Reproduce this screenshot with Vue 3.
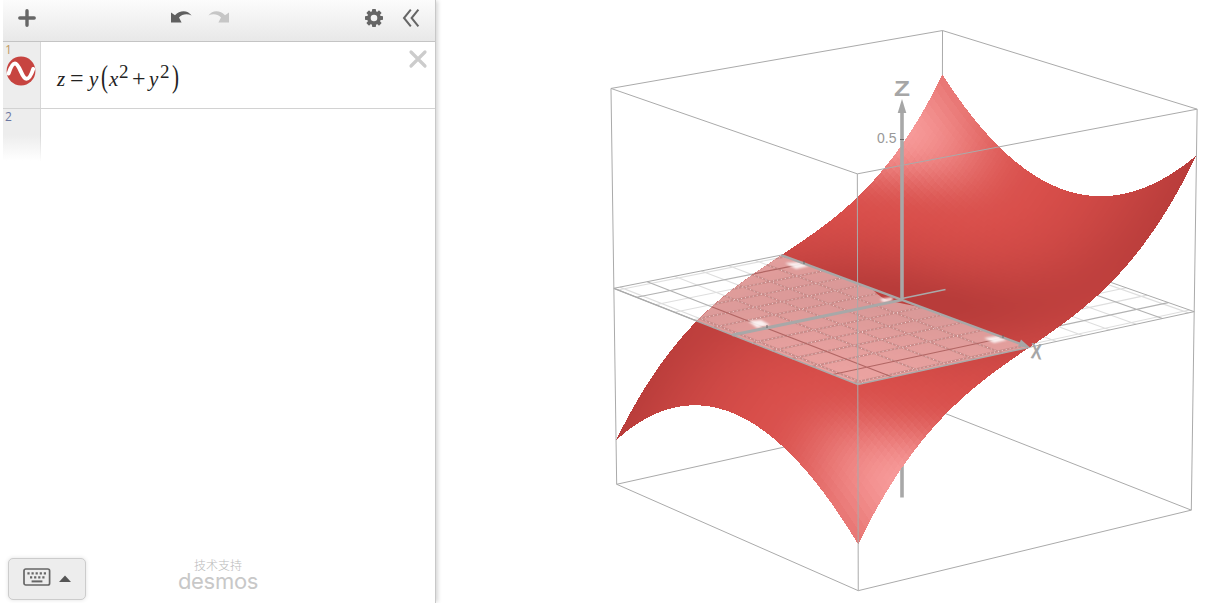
<template>
  <div class="calc">
    <aside class="panel">
      <header class="bar">
        <button class="bar__btn bar__btn--add">
          <svg width="18" height="18" viewBox="0 0 18 18"><path d="M9 1.8V16.2M1.8 9H16.2" stroke="#666" stroke-width="3.4" stroke-linecap="round" /></svg>
        </button>
        <button class="bar__btn bar__btn--undo">
          <svg width="22" height="14" viewBox="0 0 22 14"><path :d="undoPath" fill="#606060" /></svg>
        </button>
        <button class="bar__btn bar__btn--redo">
          <svg width="22" height="14" viewBox="0 0 22 14"><path :d="undoPath" fill="#c6c6c6" transform="translate(22 0) scale(-1 1)" /></svg>
        </button>
        <button class="bar__btn bar__btn--gear">
          <svg width="20" height="20" viewBox="-10 -10 20 20">
            <rect v-for="a in 8" :key="a" x="-2" y="-9" width="4" height="5" rx="0.8" fill="#666" :transform="`rotate(${a * 45})`" />
            <circle r="5.1" fill="none" stroke="#666" stroke-width="3.6" />
          </svg>
        </button>
        <button class="bar__btn bar__btn--fold">
          <svg width="18" height="20" viewBox="0 0 18 20"><path d="M8.8 1.6L2 10L8.8 18.4M16.4 1.6L9.6 10L16.4 18.4" fill="none" stroke="#666" stroke-width="2" /></svg>
        </button>
      </header>

      <div class="row">
        <div class="row__tab">
          <span class="row__num row__num--active">1</span>
          <svg class="row__icon" width="30" height="30" viewBox="0 0 30 30">
            <circle cx="15" cy="15" r="14.4" fill="#c74440" />
            <path d="M2.600 17.500C4.600 11 6.600 7.400 9 7.400C13.600 7.400 15.800 22.800 20.400 22.800C23.400 22.800 25.600 18 27.200 13" fill="none" stroke="#fff" stroke-width="4" stroke-linecap="round" />
          </svg>
        </div>
        <div class="row__math">
          <i class="z">z</i><span class="eq">=</span><i class="y1">y</i><span class="paren">(</span><i class="x">x</i><span class="pow">2</span><span class="plus">+</span><i class="y2">y</i><span class="pow">2</span><span class="paren paren--r">)</span>
        </div>
        <svg class="row__close" width="20" height="20" viewBox="0 0 20 20"><path d="M3 3L17 17M17 3L3 17" stroke="#ccc" stroke-width="3.2" stroke-linecap="round" /></svg>
      </div>
      <div class="row row--next">
        <div class="row__tab row__tab--fade"><span class="row__num">2</span></div>
      </div>

      <footer class="foot">
        <button class="keypad">
          <svg width="28" height="18" viewBox="0 0 28 18">
            <rect x="1" y="1" width="25.6" height="16" rx="1.8" fill="none" stroke="#666" stroke-width="1.7" />
            <path d="M4.4 5.4H24M7 9.4H21.6" stroke="#666" stroke-width="2.2" stroke-dasharray="2.2 1.9" />
            <path d="M8.6 13.4H19.4" stroke="#666" stroke-width="2" />
          </svg>
          <svg width="14" height="8" viewBox="0 0 14 8"><path d="M7 0.6L13 7H1Z" fill="#555" /></svg>
        </button>
        <div class="brand">
          <span class="brand__by">技术支持</span>
          <span class="brand__name">desmos</span>
        </div>
      </footer>
    </aside>

    <svg class="graph" width="786" height="603" viewBox="436 0 786 603">
      <defs>
        <filter id="soft" x="-30%" y="-50%" width="160%" height="200%"><feGaussianBlur stdDeviation="0.9" /></filter>
        <clipPath id="redArea"><path :d="lowerOutline" /></clipPath>
      </defs>

      <!-- parts hidden behind the surface -->
      <path :d="backEdges" class="edge" />
      <path d="M902 299V497.500" class="axis axis--z" />
      <path :d="minorLines" class="minor" />
      <path :d="majorLines" class="major" />
      <path :d="planeBorder" class="edge" />

      <g shape-rendering="crispEdges">
        <path v-for="(c, i) in lowerCells" :key="i" :d="c.d" :fill="c.fill" />
      </g>

      <!-- translucent xy plane over the lower half -->
      <g clip-path="url(#redArea)">
        <path :d="frontPlane" fill="#fff" fill-opacity="0.48" />
        <path :d="frontMinor" class="veil" />
        <path :d="frontMinor" class="dots" />
        <path :d="frontMajor" class="veil veil--major" />
      </g>
      <path :d="frontBorder" class="edge edge--plane" />

      <g shape-rendering="crispEdges">
        <path v-for="(c, i) in upperCells" :key="i" :d="c.d" :fill="c.fill" />
      </g>
      <path d="M873 290Q882 299 890 301Q905 304 924 308L902 298.500Z" fill="#bd403d" />

      <g fill="#fff" filter="url(#soft)" opacity="0.85">
        <path d="M785 263L800 262L809 266L796 269Z" />
        <path d="M748 321L761 320L770 325L757 328Z" />
        <path d="M984 338L998 336L1007 340L994 343Z" />
        <path d="M880 299L893 297L892 301L883 302Z" />
      </g>

      <path :d="xAxis" class="axis" />
      <path :d="yAxis" class="axis axis--y" />
      <path d="M902 298.500L945.500 289.500" stroke="#aaa" stroke-width="1.500" />
      <path d="M902 299V108" class="axis axis--z" />
      <path d="M902 99L906.300 113H897.700Z" fill="#a6a6a6" />
      <path d="M1030 347.500L1018 346.500L1021 339.500Z" fill="#a6a6a6" />
      <path d="M900 139.500H904M767 325V328M804 261V264M1003 335V338" stroke="#666" stroke-width="1" />
      <path :d="frontEdges" class="edge" />

      <text x="894" y="96" class="name" textLength="16" lengthAdjust="spacingAndGlyphs">Z</text>
      <text x="877" y="143" class="tick">0.5</text>
      <text class="name name--x" transform="translate(1030.500 358) rotate(9) skewX(6)" textLength="11" lengthAdjust="spacingAndGlyphs">X</text>
    </svg>
  </div>
</template>

<script setup>
const undoPath = 'M1 2.6L5 5.2C9.500 0.200 17.500 -0.600 21.600 5.600C17.400 3.200 12.400 3.800 9 7.400L11.600 12.600H1Z'

// camera
const YAW = 53.25 * Math.PI / 180
const PITCH = 16.1 * Math.PI / 180
const DIST = 27.9
const FOCAL = 5784
const S = Math.sin(YAW)
const C = Math.cos(YAW)
const CX = 902
const CY = 299.9

// half size of the visible box, in graph units
const HALF = 0.622

function project(x, y, z) {
  const side = x * C + y * S
  const away = y * C - x * S
  const up = z * Math.cos(PITCH) + away * Math.sin(PITCH)
  const depth = DIST + away * Math.cos(PITCH) - z * Math.sin(PITCH)
  return [CX + FOCAL * side / depth, CY - FOCAL * up / depth]
}

function line(...points) {
  return 'M' + points.map(p => project(...p).map(n => n.toFixed(2)).join(' ')).join('L')
}

const height = (x, y) => HALF * HALF * y * (x * x + y * y)

function mix(a, b, t) {
  return a.map((v, i) => v + (b[i] - v) * t)
}

const LIGHT = [0.45, -0.65, 0.6]

function shade(u, v) {
  const x = u * HALF
  const y = v * HALF
  const n = [-2 * x * y, -(x * x + 3 * y * y), 1]
  const dot = (n[0] * LIGHT[0] + n[1] * LIGHT[1] + n[2] * LIGHT[2]) / Math.hypot(...n)
  const diffuse = Math.min(1, Math.max(0, (dot - 0.62) / 0.3))
  const spec = Math.pow(Math.min(1, dot / 0.993), 60)
  const base = mix([184, 60, 58], [216, 78, 74], diffuse)
  return `rgb(${mix(base, [255, 174, 174], spec).map(Math.round).join(',')})`
}

function cells(from, to) {
  const out = []
  const cols = 80
  const rows = 44
  for (let j = rows - 1; j >= 0; j--) {
    for (let i = 0; i < cols; i++) {
      const u0 = -1 + 2 * i / cols
      const u1 = -1 + 2 * (i + 1) / cols
      const v0 = from + (to - from) * j / rows
      const v1 = from + (to - from) * (j + 1) / rows
      const quad = [[u0, v0], [u1, v0], [u1, v1], [u0, v1]].map(([u, v]) => [u, v, height(u, v)])
      out.push({ d: line(...quad) + 'Z', fill: shade((u0 + u1) / 2, (v0 + v1) / 2) })
    }
  }
  return out
}

const lowerCells = cells(-1, 0)
const upperCells = cells(0, 1)

// silhouette of the lower half
const rim = []
for (let i = 0; i <= 40; i++) rim.push([-1, -i / 40])
for (let i = 1; i <= 40; i++) rim.push([-1 + i / 20, -1])
for (let i = 39; i >= 0; i--) rim.push([1, -i / 40])
const lowerOutline = line(...rim.map(([u, v]) => [u, v, height(u, v)])) + 'Z'

const minorSteps = [-6, -4, -3, -2, -1, 1, 2, 3, 4, 6].map(n => n / 10 / HALF)
const majorSteps = [-0.5 / HALF, 0.5 / HALF]

function gridLines(steps, top = 1) {
  return steps.map(s => line([s, -1, 0], [s, top, 0]) + (s > top ? '' : line([-1, s, 0], [1, s, 0]))).join('')
}

const minorLines = gridLines(minorSteps)
const majorLines = gridLines(majorSteps)
const frontMinor = gridLines(minorSteps, 0)
const frontMajor = gridLines(majorSteps, 0)

const planeBorder = line([-1, -1, 0], [1, -1, 0], [1, 1, 0], [-1, 1, 0]) + 'Z'
const frontPlane = line([-1, -1, 0], [1, -1, 0], [1, 0, 0], [-1, 0, 0]) + 'Z'
const frontBorder = line([-1, -1, 0], [1, -1, 0], [1, 0, 0])

const backEdges = line([-1, -1, -1], [-1, 1, -1], [1, 1, -1]) + line([-1, 1, -1], [-1, 1, 1])
const frontEdges =
  line([-1, -1, 1], [1, -1, 1], [1, 1, 1], [-1, 1, 1]) + 'Z' +
  line([-1, -1, -1], [1, -1, -1], [1, 1, -1]) +
  line([-1, -1, -1], [-1, -1, 1]) +
  line([1, -1, -1], [1, -1, 1]) +
  line([1, 1, -1], [1, 1, 1])

const xAxis = line([-1, 0, 0], [0.96, 0, 0])
const yAxis = line([0, -1, 0], [0, 0, 0])
</script>

<style>
body {
  margin: 0;
  background: #fff;
}
</style>

<style scoped>
.calc {
  display: flex;
  width: 1222px;
  height: 603px;
  overflow: hidden;
  background: #fff;
  font-family: 'Liberation Sans', Arial, sans-serif;
}

.panel {
  display: flex;
  flex-direction: column;
  flex: none;
  width: 432px;
  margin-left: 3px;
  border-right: 1px solid #c8c8c8;
  box-shadow: 3px 0 4px -1px rgba(0, 0, 0, 0.16);
}

button {
  border: 0;
  padding: 0;
  background: none;
}

/* Toolbar */
.bar {
  display: flex;
  align-items: flex-start;
  height: 41px;
  border-bottom: 1px solid #c4c4c4;
  background: linear-gradient(#fcfcfc, #e8e8e8);
}

.bar__btn {
  display: flex;
}

.bar__btn--add {
  margin: 9px 0 0 15px;
}

.bar__btn--undo {
  margin: 10px 0 0 134px;
}

.bar__btn--redo {
  margin: 10px 0 0 16px;
}

.bar__btn--gear {
  margin: 8px 0 0 134px;
}

.bar__btn--fold {
  margin: 8px 0 0 18px;
}

/* Expressions */
.row {
  display: flex;
  height: 66px;
  border-bottom: 1px solid #d2d2d2;
}

.row--next {
  height: 52px;
  border-bottom: 0;
}

.row__tab {
  display: flex;
  flex-direction: column;
  width: 37px;
  border-right: 1px solid #d8d8d8;
  background: #ededed;
}

.row__tab--fade {
  background: linear-gradient(#ededed 50%, #fff);
  border-image: linear-gradient(#d8d8d8 50%, #fff) 1;
}

.row__num {
  margin: 1px 0 0 2px;
  font-family: 'Open Sans', sans-serif;
  font-size: 12px;
  line-height: 14px;
  color: #6a76a0;
}

.row__num--active {
  color: #c09a62;
}

.row__icon {
  margin: -1px 0 0 3px;
}

.row__math {
  display: flex;
  flex: 1;
  align-items: baseline;
  margin: 24px 0 0 16px;
  height: 30px;
  font-family: 'Liberation Serif', 'Times New Roman', serif;
  font-size: 21px;
  line-height: 24px;
  color: #222;
}

.z {
  width: 13px;
}

.eq {
  width: 19px;
  font-size: 24px;
}

.y1 {
  width: 12px;
}

.paren {
  width: 8px;
  font-size: 21px;
  transform: translateY(-3px) scale(1, 1.5);
}

.paren--r {
  margin-left: 1px;
}

.x {
  width: 10px;
}

.pow {
  width: 11px;
  font-size: 19px;
  transform: translateY(-8px);
}

.plus {
  width: 17px;
  margin-left: 2px;
  font-size: 24px;
}

.y2 {
  width: 11px;
}

.row__close {
  margin: 7px 7px 0 0;
}

/* Footer */
.foot {
  display: flex;
  align-items: flex-start;
  height: 45px;
  margin-top: auto;
}

.keypad {
  display: flex;
  align-items: center;
  gap: 7px;
  box-sizing: border-box;
  width: 78px;
  height: 42px;
  margin-left: 5px;
  padding: 0 0 5px 14px;
  border: 1px solid #ccc;
  border-radius: 5px;
  background: #ededed;
  box-shadow: 0 0 4px rgba(0, 0, 0, 0.12);
}

.keypad svg:last-child {
  margin-top: 5px;
}

.brand {
  display: flex;
  flex-direction: column;
  align-items: center;
  width: 80px;
  margin-left: 92px;
  color: #bbb;
}

.brand__by {
  font-family: 'Noto Sans CJK SC', sans-serif;
  font-size: 12px;
  font-weight: 300;
  line-height: 14px;
}

.brand__name {
  font-family: Inter, sans-serif;
  font-size: 22px;
  line-height: 18px;
  letter-spacing: -0.3px;
  color: #c8c8c8;
}

/* Graph */
.graph {
  flex: none;
  display: block;
}

.edge {
  fill: none;
  stroke: #aaa;
  stroke-width: 1;
}

.edge--plane {
  stroke-width: 1.4;
}

.minor {
  fill: none;
  stroke: #dedede;
  stroke-width: 1.1;
}

.major {
  fill: none;
  stroke: #b2b2b2;
  stroke-width: 1.2;
}

.veil {
  fill: none;
  stroke: #c98a88;
  stroke-width: 1.8;
}

.veil--major {
  stroke: #b26664;
  stroke-width: 1.2;
}

.dots {
  fill: none;
  stroke: #f5dddd;
  stroke-width: 0.9;
  stroke-dasharray: 1 3;
}

.axis {
  fill: none;
  stroke: #a8a8a8;
  stroke-width: 2.4;
}

.axis--y {
  stroke-width: 3;
}

.axis--z {
  stroke-width: 3.6;
}

.name {
  font: bold 22px 'Liberation Sans', Arial, sans-serif;
  fill: #a6a6a6;
}

.name--x {
  font-size: 22px;
}

.tick {
  font: 14px 'Liberation Sans', Arial, sans-serif;
  fill: #999;
}
</style>
